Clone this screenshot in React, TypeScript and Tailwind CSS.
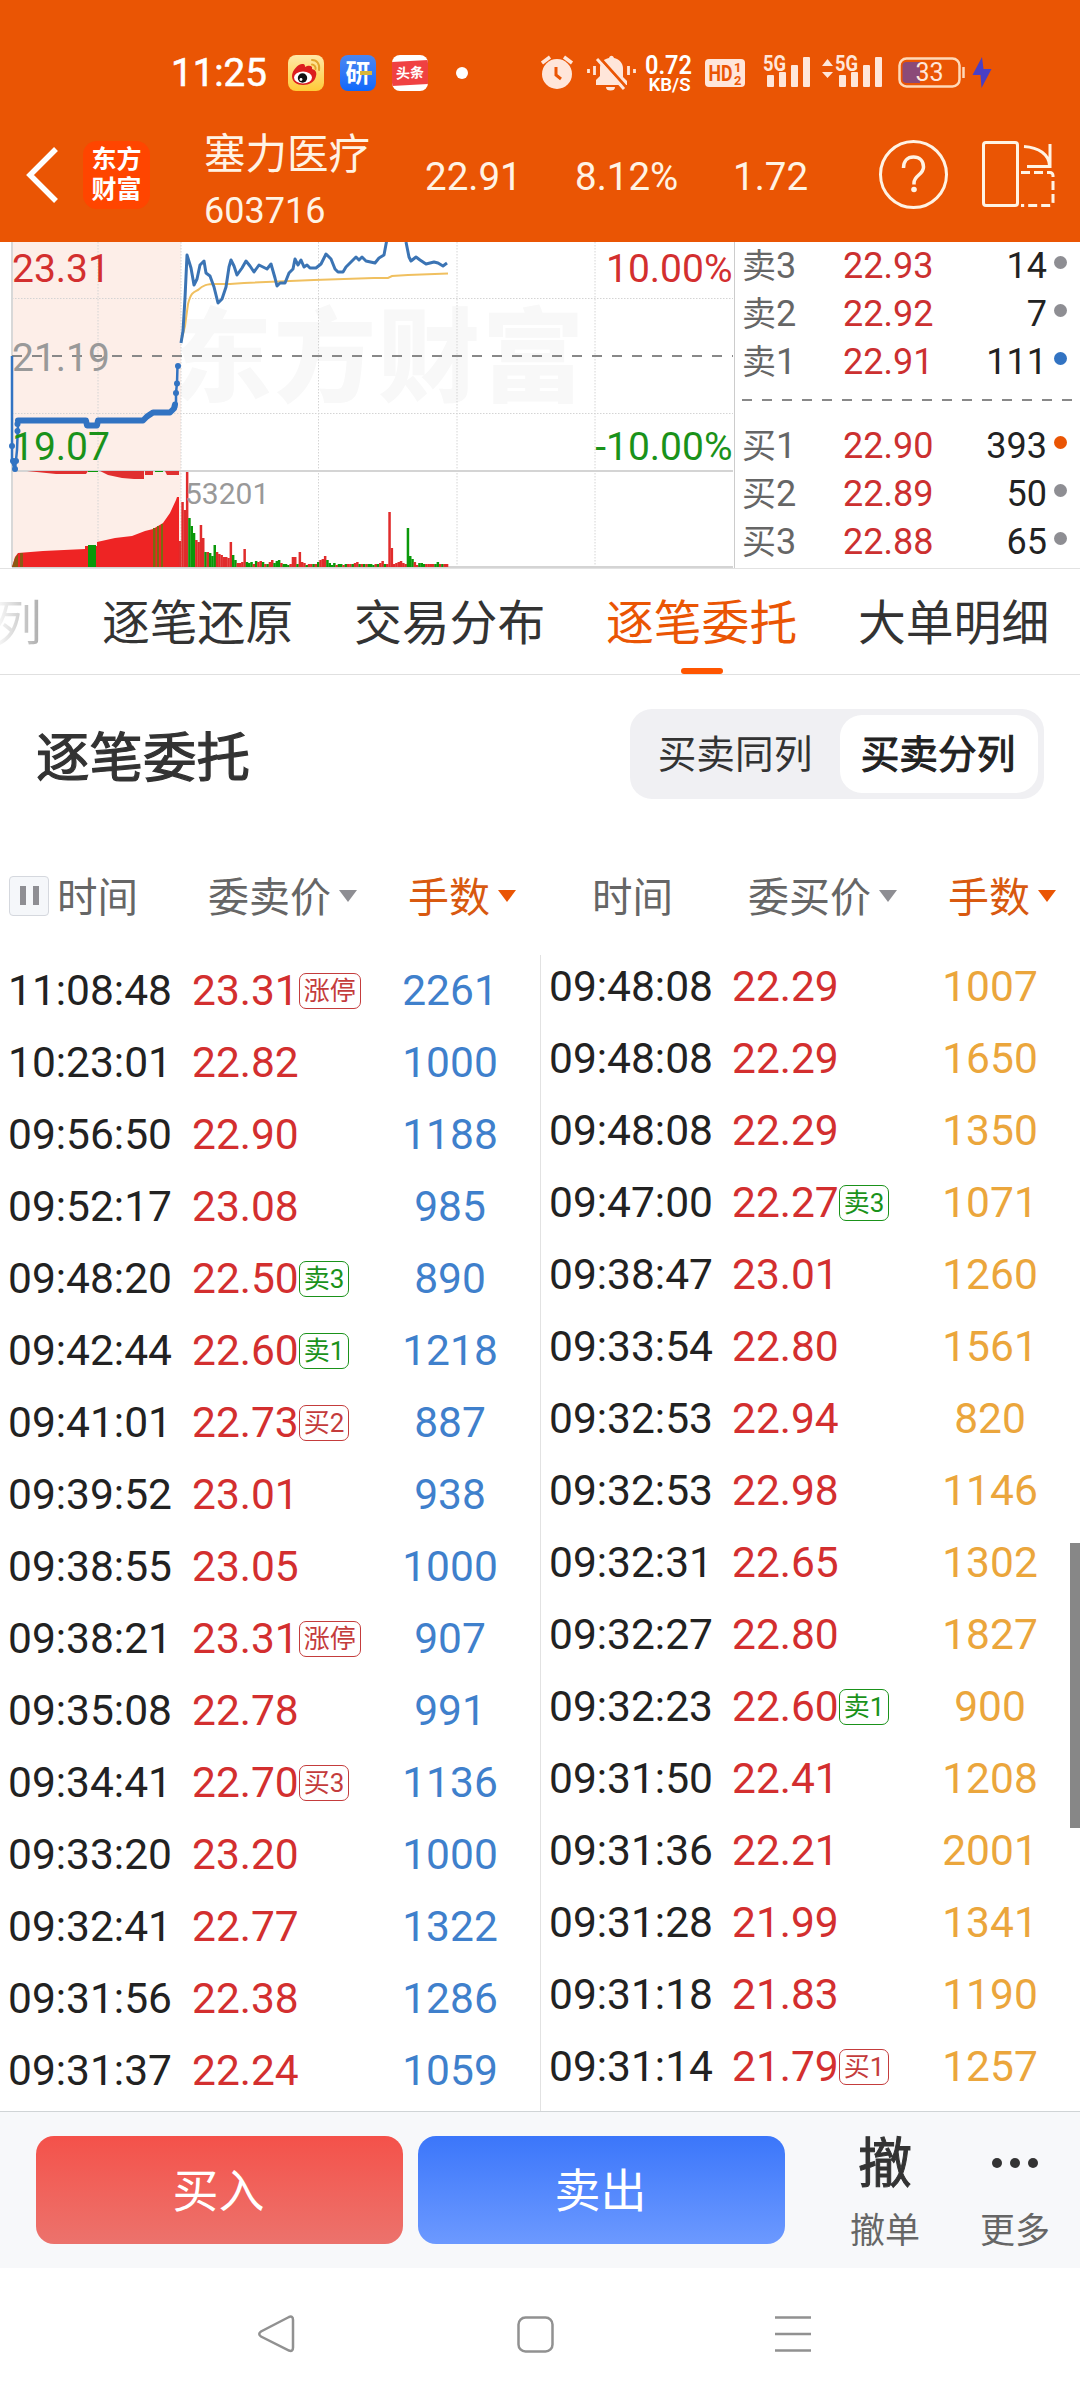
import React from 'react';

type Order = {
  time: string;
  price: string;
  volume: number;
  tag?: string;
};

type Quote = {
  label: string;
  price: string;
  volume: number;
  dot: string;
};

const sellOrders: Order[] = [
  { time: '11:08:48', price: '23.31', volume: 2261, tag: '涨停' },
  { time: '10:23:01', price: '22.82', volume: 1000 },
  { time: '09:56:50', price: '22.90', volume: 1188 },
  { time: '09:52:17', price: '23.08', volume: 985 },
  { time: '09:48:20', price: '22.50', volume: 890, tag: '卖3' },
  { time: '09:42:44', price: '22.60', volume: 1218, tag: '卖1' },
  { time: '09:41:01', price: '22.73', volume: 887, tag: '买2' },
  { time: '09:39:52', price: '23.01', volume: 938 },
  { time: '09:38:55', price: '23.05', volume: 1000 },
  { time: '09:38:21', price: '23.31', volume: 907, tag: '涨停' },
  { time: '09:35:08', price: '22.78', volume: 991 },
  { time: '09:34:41', price: '22.70', volume: 1136, tag: '买3' },
  { time: '09:33:20', price: '23.20', volume: 1000 },
  { time: '09:32:41', price: '22.77', volume: 1322 },
  { time: '09:31:56', price: '22.38', volume: 1286 },
  { time: '09:31:37', price: '22.24', volume: 1059 },
];

const buyOrders: Order[] = [
  { time: '09:48:08', price: '22.29', volume: 1007 },
  { time: '09:48:08', price: '22.29', volume: 1650 },
  { time: '09:48:08', price: '22.29', volume: 1350 },
  { time: '09:47:00', price: '22.27', volume: 1071, tag: '卖3' },
  { time: '09:38:47', price: '23.01', volume: 1260 },
  { time: '09:33:54', price: '22.80', volume: 1561 },
  { time: '09:32:53', price: '22.94', volume: 820 },
  { time: '09:32:53', price: '22.98', volume: 1146 },
  { time: '09:32:31', price: '22.65', volume: 1302 },
  { time: '09:32:27', price: '22.80', volume: 1827 },
  { time: '09:32:23', price: '22.60', volume: 900, tag: '卖1' },
  { time: '09:31:50', price: '22.41', volume: 1208 },
  { time: '09:31:36', price: '22.21', volume: 2001 },
  { time: '09:31:28', price: '21.99', volume: 1341 },
  { time: '09:31:18', price: '21.83', volume: 1190 },
  { time: '09:31:14', price: '21.79', volume: 1257, tag: '买1' },
];

const asks: Quote[] = [
  { label: '卖3', price: '22.93', volume: 14, dot: 'bg-[#8e8e93]' },
  { label: '卖2', price: '22.92', volume: 7, dot: 'bg-[#8e8e93]' },
  { label: '卖1', price: '22.91', volume: 111, dot: 'bg-[#3273c2]' },
];

const bids: Quote[] = [
  { label: '买1', price: '22.90', volume: 393, dot: 'bg-[#ea5504]' },
  { label: '买2', price: '22.89', volume: 50, dot: 'bg-[#8e8e93]' },
  { label: '买3', price: '22.88', volume: 65, dot: 'bg-[#8e8e93]' },
];

// 连续竞价成交量: [x, 高度, 颜色]
const volumeBars: [number, number, 'r' | 'g'][] = [
  [180, 26, 'r'], [182.5, 65, 'r'], [184.8, 57, 'r'], [187.1, 95, 'r'], [189.4, 49, 'g'],
  [191.7, 41, 'g'], [194, 34, 'g'], [196.3, 27, 'r'], [198.6, 25, 'r'], [200.9, 42, 'r'],
  [203.2, 29, 'r'], [205.5, 15, 'g'], [207.8, 15, 'r'], [210.1, 14, 'g'], [212.4, 11, 'g'],
  [214.7, 22, 'g'], [217, 15, 'r'], [219.3, 13, 'r'], [221.6, 12, 'r'], [223.9, 10, 'r'],
  [226.2, 10, 'r'], [228.5, 9, 'r'], [230.8, 25, 'r'], [233.1, 12, 'g'], [235.4, 7, 'g'],
  [237.7, 4, 'r'], [240, 4, 'r'], [242.3, 5, 'r'], [244.6, 18, 'r'], [246.9, 5, 'g'],
  [249.2, 4, 'g'], [251.5, 5, 'g'], [253.8, 3, 'r'], [256.1, 6, 'g'], [258.4, 5, 'r'],
  [260.7, 6, 'r'], [263, 5, 'g'], [265.3, 3, 'r'], [267.6, 3, 'g'], [269.9, 5, 'r'],
  [272.2, 7, 'r'], [274.5, 4, 'g'], [276.8, 6, 'g'], [279.1, 7, 'g'], [281.4, 4, 'r'],
  [283.7, 3, 'g'], [286, 3, 'g'], [288.3, 2, 'g'], [290.6, 3, 'r'], [292.9, 10, 'r'],
  [295.2, 10, 'r'], [297.5, 3, 'g'], [299.8, 15, 'r'], [302.1, 5, 'r'], [304.4, 4, 'r'],
  [306.7, 2, 'g'], [309, 3, 'r'], [311.3, 3, 'r'], [313.6, 3, 'g'], [315.9, 3, 'r'],
  [318.2, 5, 'g'], [320.5, 7, 'r'], [322.8, 8, 'r'], [325.1, 11, 'r'], [327.4, 7, 'g'],
  [329.7, 4, 'g'], [332, 2, 'g'], [334.3, 4, 'g'], [336.6, 2, 'r'], [338.9, 3, 'g'],
  [341.2, 3, 'g'], [343.5, 2, 'r'], [345.8, 3, 'g'], [348.1, 3, 'r'], [350.4, 3, 'r'],
  [352.7, 3, 'g'], [355, 4, 'r'], [357.3, 5, 'r'], [359.6, 3, 'g'], [361.9, 3, 'r'],
  [364.2, 3, 'g'], [366.5, 3, 'r'], [368.8, 3, 'g'], [371.1, 3, 'g'], [373.4, 2, 'g'],
  [375.7, 3, 'r'], [378, 3, 'g'], [380.3, 4, 'r'], [382.6, 6, 'r'], [384.9, 3, 'g'],
  [387.2, 3, 'r'], [389.5, 55, 'r'], [391.8, 19, 'r'], [394.1, 3, 'r'], [396.4, 4, 'r'],
  [398.7, 5, 'r'], [401, 6, 'r'], [403.3, 4, 'r'], [405.6, 3, 'r'], [407.9, 39, 'g'],
  [410.2, 11, 'g'], [412.5, 8, 'g'], [414.8, 5, 'r'], [417.1, 2, 'r'], [419.4, 4, 'g'],
  [421.7, 4, 'g'], [424, 3, 'g'], [426.3, 3, 'r'], [428.6, 3, 'r'], [430.9, 3, 'r'],
  [433.2, 3, 'r'], [435.5, 3, 'g'], [437.8, 5, 'g'], [440.1, 3, 'r'], [442.4, 3, 'g'],
  [444.7, 3, 'r'], [447, 3, 'r'],
];

export default function App() {
  return (
    <div className="flex h-[2400px] w-[1080px] flex-col overflow-hidden bg-white font-[Roboto,'Noto_Sans_CJK_SC',sans-serif] text-[#222]">
      <header className="h-[242px] shrink-0 bg-[#ea5504] text-white">
        <StatusBar />
        <StockHeader />
      </header>

      <section className="flex h-[327px] shrink-0 overflow-hidden border-b border-[#e2e2e2]">
        <TimeChart />
        <div className="flex flex-1 flex-col border-l border-[#ccc] pl-[7px]">
          <div>
            {asks.map((q) => (
              <QuoteRow key={q.label} quote={q} />
            ))}
          </div>
          <svg className="h-9 w-full shrink-0" viewBox="0 0 338 36">
            <path d="M0 14H330" stroke="#888" strokeWidth="2" strokeDasharray="10 10" />
          </svg>
          <div>
            {bids.map((q) => (
              <QuoteRow key={q.label} quote={q} />
            ))}
          </div>
        </div>
      </section>

      <Tabs />

      <div className="flex h-[161px] shrink-0 items-center justify-between px-9 pb-1">
        <h2 className="pt-2.5 text-[53.5px] leading-none text-[#333] [-webkit-text-stroke:1.2px_#333]">逐笔委托</h2>
        <div className="flex h-[90px] w-[414px] items-center rounded-[22px] bg-[#f0f0f3] p-1.5 text-[38.7px] leading-none">
          <span className="w-[204px] pt-1 pr-1.5 text-center text-[#333]">买卖同列</span>
          <span className="flex h-[78px] flex-1 items-center justify-center rounded-[22px] bg-white pt-1 pr-0.5 text-[#222] [-webkit-text-stroke:1px_#222]">
            买卖分列
          </span>
        </div>
      </div>

      <div className="flex h-[119px] shrink-0 text-[40.5px] leading-none text-[#666]">
        <div className="flex w-[540px] items-center">
          <div className="flex w-[208px] items-center pl-[9px]">
            <span className="mr-2 flex h-10 w-10 items-center justify-center gap-[7px] rounded-[4px] border border-[#d5d8de] bg-[#f5f7fa]">
              <i className="h-[19px] w-1.5 bg-[#8e8e93]" />
              <i className="h-[19px] w-1.5 bg-[#8e8e93]" />
            </span>
            <span className="pt-[5px]">时间</span>
          </div>
          <SortLabels price="委卖价" />
        </div>
        <div className="flex w-[540px] items-center">
          <div className="w-[208px] pt-[5px] pl-[52px]">时间</div>
          <SortLabels price="委买价" />
        </div>
      </div>

      <div className="relative flex h-[1156px] shrink-0">
        <div className="w-[540px]">
          {sellOrders.map((o, i) => (
            <OrderRow key={i} order={o} side="sell" />
          ))}
        </div>
        <div className="w-[540px] border-l border-[#e2e2e2]">
          <div className="-mt-1 -ml-px">
            {buyOrders.map((o, i) => (
              <OrderRow key={i} order={o} side="buy" />
            ))}
          </div>
        </div>
        <div className="absolute top-[588px] right-0 h-[285px] w-2.5 bg-[#878787]" />
      </div>

      <ActionBar />
      <NavBar />
    </div>
  );
}

const StatusBar = () => (
  <div className="flex h-[108px] items-end pl-[171px]">
    <div className="flex h-[70px] w-[370px] items-center">
      <span className="w-[117px] text-[38.5px] [-webkit-text-stroke:0.6px_#fff]">11:25</span>
      <svg className="mr-4 h-9 w-9" viewBox="0 0 36 36">
        <defs>
          <linearGradient id="weibo" x1="0" y1="0" x2="0" y2="1">
            <stop offset="0" stopColor="#ffe9a8" />
            <stop offset="1" stopColor="#ffcb38" />
          </linearGradient>
        </defs>
        <rect width="36" height="36" rx="8" fill="url(#weibo)" />
        <path d="M4 21C4 15 11 8 15 9c2 0 2 2 2 3 3-2 8-2 7 2 4 1 5 4 4 7-1 6-7 9-13 9S4 27 4 21z" fill="#dc1e1e" />
        <ellipse cx="15" cy="22.500" rx="9" ry="6" fill="#fff" />
        <circle cx="14.500" cy="23" r="4.700" fill="#111" />
        <circle cx="13" cy="24.500" r="1.400" fill="#fff" />
        <path d="M24 5c5 0 8 4 7 10M24 9.500c2 0 4 2 3.500 4.500" fill="none" stroke="#e2a52c" strokeWidth="2" strokeLinecap="round" />
      </svg>
      <span className="relative mr-4 flex h-9 w-9 items-center justify-center rounded-lg bg-linear-to-b from-[#4a86f0] to-[#0c68fb] text-[25px] leading-none font-bold">
        研
        <i className="absolute top-4 left-5 h-1 w-3 bg-[#d9b63a]" />
      </span>
      <span className="mr-[28px] flex h-9 w-9 items-center overflow-hidden rounded-lg bg-white">
        <span className="flex h-[24px] w-full -skew-y-3 items-center justify-center bg-[#f04142] text-[14px] leading-none font-bold">
          头条
        </span>
      </span>
      <span className="h-3 w-3 rounded-full bg-white" />
    </div>
    <svg className="mb-[10px] h-[50px] w-[539px] font-[Roboto]" viewBox="541 48 539 50" fill="#ffe6da">
      {/* 闹钟 */}
      <circle cx="557" cy="74" r="15" />
      <path d="M542 63l8-6M572 63l-8-6" stroke="#ffe6da" strokeWidth="3.500" />
      <path d="M556 67v8l5 4" fill="none" stroke="#ea5504" strokeWidth="3" />
      {/* 静音 */}
      <path d="M596 85v-5l4-4v-8c0-6 4-9 9-10 1-3 4-3 5 0 5 1 9 5 9 10v9l4 4v4z" />
      <path d="M606 87h9a4.500 3.500 0 0 1-9 0z" />
      <path d="M588.500 69v4M594.500 66v9M628.500 66v9M634.500 69v4" stroke="#ffe6da" strokeWidth="2.800" />
      <path d="M599 57l27 30" stroke="#ea5504" strokeWidth="3" />
      <path d="M597 59l27 30" stroke="#ffe6da" strokeWidth="3" />
      {/* 网速 */}
      <text x="668.500" y="74" fontSize="25.500" fontWeight="600" textAnchor="middle" fill="#fff" textLength="47" lengthAdjust="spacingAndGlyphs">0.72</text>
      <text x="669.500" y="91" fontSize="19" fontWeight="600" textAnchor="middle" fill="#fff" textLength="42" lengthAdjust="spacingAndGlyphs">KB/S</text>
      {/* HD */}
      <rect x="705" y="59" width="40" height="28" rx="4" />
      <g fill="#ea5504" fontWeight="700">
        <text x="708.500" y="81" fontSize="22" textLength="24" lengthAdjust="spacingAndGlyphs">HD</text>
        <text x="734" y="72" fontSize="13">1</text>
        <text x="734" y="84.500" fontSize="13">2</text>
      </g>
      <Signal x={763} />
      <path d="M822 66l5.500-7 5.500 7zM822 72h11l-5.500 6z" />
      <Signal x={835} />
      {/* 电池 */}
      <rect x="899.500" y="58.500" width="60" height="28" rx="7" fill="none" stroke="#ffd9b8" strokeWidth="2.500" />
      <path d="M902.500 66a4 4 0 0 1 4-4H920v21h-13.500a4 4 0 0 1-4-4z" fill="#8b4a78" />
      <path d="M963.500 67v11" stroke="#ffd9b8" strokeWidth="2.500" />
      <text x="929.500" y="81" fontSize="25" textAnchor="middle">33</text>
      <path d="M982 57l-9.500 18h8l1 13 10-19h-8z" fill="#4a3fc4" />
    </svg>
  </div>
);

const Signal = ({ x }: { x: number }) => (
  <g>
    <text x={x} y="70.500" fontSize="22" fontWeight="700" textLength="23" lengthAdjust="spacingAndGlyphs">5G</text>
    <rect x={x + 4} y="75" width="7" height="12" rx="1" />
    <rect x={x + 16} y="72" width="7" height="15" rx="1" />
    <rect x={x + 28} y="65" width="7" height="22" rx="1" />
    <rect x={x + 40} y="57" width="7" height="30" rx="1" />
  </g>
);

const StockHeader = () => (
  <div className="flex h-[134px] items-center text-[#fff3e4]">
    <svg className="ml-[26px] h-[60px] w-[34px]" viewBox="0 0 34 60" fill="none">
      <path d="M30 4L4 30l26 26" stroke="#fff" strokeWidth="5.500" />
    </svg>
    <div className="ml-[23px] flex h-[68px] w-[67px] flex-col items-center justify-center gap-1 rounded-[14px] bg-[#ff4500] text-[25px] leading-[26px] font-bold text-white">
      <span>东方</span>
      <span>财富</span>
    </div>
    <div className="ml-[54px] flex w-[221px] flex-col pt-4">
      <span className="text-[41.5px] leading-[56px]">塞力医疗</span>
      <span className="text-[36px] leading-[56px]">603716</span>
    </div>
    <div className="flex w-[450px] pt-1 text-[38.5px]">
      <span className="w-[150px]">22.91</span>
      <span className="w-[158px]">8.12%</span>
      <span>1.72</span>
    </div>
    <svg className="h-[76px] w-[190px]" viewBox="875 137 190 76" fill="none" stroke="#fff3e4" strokeWidth="3">
      <circle cx="913.500" cy="174.500" r="33" />
      <path d="M903.500 168c0-7 4-11 10-11s10 4 10 10c0 8-9.500 8-9.500 16v1.500" strokeWidth="3.500" />
      <circle cx="914" cy="189.500" r="2.800" fill="#fff3e4" stroke="none" />
      <rect x="983.500" y="142.500" width="34" height="63" rx="2.500" />
      <path d="M1024 146.500c15 1 25 8 25.500 19M1050 144v22.500h-23" />
      <path d="M1021 172.500h29a3 3 0 0 1 3 3v27a3 3 0 0 1-3 3h-29" strokeDasharray="9 4" />
    </svg>
  </div>
);

const TimeChart = () => (
  <svg className="h-[326px] w-[734px] shrink-0 font-[Roboto]" viewBox="0 242 734 326" fill="none">
    <text x="170" y="394" fontSize="102" fontWeight="900" fill="#f8f8f8" className="font-['Noto_Sans_CJK_SC']" textLength="414">东方财富</text>
    <rect x="12" y="242" width="169" height="325" fill="#fdeee8" />
    <path d="M12 298.500H733M12 413.500H733M98 242V567M181 242V567M318.500 242V567M457 242V567M595 242V567" stroke="#d4d4d4" strokeDasharray="1.500 1.500" />
    <path d="M12 242V567" stroke="#d8d8d8" strokeWidth="2" />
    <path d="M12 356H733" stroke="#888" strokeWidth="2" strokeDasharray="10 10" />
    <path d="M12 471H733M12 567H733" stroke="#d4d4d4" strokeWidth="2" />

    {/* 集合竞价 */}
    <path d="M12 567L15 557 18 553 43 551 85 549V546H97V542L115 538 132 536 145 531 153 529 163 523 170 513 176 500 177 497H179V567z" fill="#ee2424" />
    <path d="M88 545h8v22h-8z" fill="#0a980a" />
    <path d="M153 528h2.500v39H153zM157 526h2v41h-2zM161 524h2v43h-2z" fill="#7a6a10" />
    <path d="M12 567l3-9 3-4v13zM20 553h3v14h-3z" fill="#8a5a14" />
    <path d="M27 471H88l-2 3-30 0zM100 471h44v8h-10l-12-1-14-3zM145 471h8v4h-8zM165 471h14v4h-12z" fill="#e03030" />
    <path d="M88 471.500h10M155 471.500h8" stroke="#0a980a" />
    {volumeBars.map(([x, h, c]) => (
      <rect key={x} x={x - 1.2} y={567 - h} width="2.500" height={h} fill={c === 'r' ? '#e02c2c' : '#0a980a'} />
    ))}

    {/* 均价线 */}
    <path d="M181 342l4-16 3-22c3-12 6-12 10-14 5-5 9-6 18-6h14l14-1 70-3 60-2 14 0 4-2 16-1 40-1.500" stroke="#f0c060" strokeWidth="2" />
    {/* 分时线 */}
    <path
      d="M181 343l2-12 2-33 2-43 4 13 3 17 3-6 3-14 4-4 2 12 4 3 4 11 4 16 4-4 4-12 3-20 2-7 3 6 3 9 5-7 4-7 4 5 4 6 5-7 8 4 4-5 4 14 2 8 3-3 5 0 4-10 4-4 2-10 3 6 3-5 3 7 3-2 3 3 6 0 5-4 5-10 5 5 4 10 3 3h5l3-5 5-5 5-5 3 3 3-3 4 4 9 2 4-5 5-3 3-16M406 242l3 15 2 4 5-4 4 3 6 4 8-2 4 1 5 3 4-3"
      stroke="#3b74b4"
      strokeWidth="3"
      strokeLinejoin="round"
    />
    <path d="M12 356V461l3 9 2-20 1-26" stroke="#3273c2" strokeWidth="2.500" />
    <path d="M18 420.500H86l1 5h10l1-5h45l4-4 6-4h17l4-4 1-4" stroke="#3273c2" strokeWidth="6" strokeLinecap="round" strokeLinejoin="round" />
    <path d="M176 408V393l1-10 .5-17" stroke="#3273c2" strokeWidth="2.500" />
    <g fill="#3273c2">
      <circle cx="12" cy="446" r="3" />
      <circle cx="13" cy="461" r="3" />
      <circle cx="16" cy="461" r="3" />
      <circle cx="15" cy="469" r="3" />
      <circle cx="17.500" cy="431" r="3" />
      <circle cx="17.500" cy="424" r="3" />
      <circle cx="176" cy="393" r="3" />
      <circle cx="177" cy="383.500" r="3" />
      <circle cx="178" cy="366" r="3" />
    </g>

    <g fontSize="39">
      <text x="12" y="282" fill="#d32f2f">23.31</text>
      <text x="12" y="371" fill="#999">21.19</text>
      <text x="12" y="460" fill="#1a921a">19.07</text>
      <text x="732.500" y="282" fill="#d32f2f" textAnchor="end">10.00%</text>
      <text x="732.500" y="460" fill="#1a921a" textAnchor="end">-10.00%</text>
    </g>
    <text x="185" y="504" fontSize="30" fill="#999">53201</text>
  </svg>
);

const QuoteRow = ({ quote }: { quote: Quote }) => (
  <div className="flex h-12 items-center text-[36px] leading-none">
    <span className="w-[101px] text-[#666]">
      <span className="text-[34px]">{quote.label[0]}</span>
      {quote.label[1]}
    </span>
    <span className="w-[100px] text-[#cc3030]">{quote.price}</span>
    <span className="w-[104px] text-right">{quote.volume}</span>
    <span className={`mb-2 ml-[7px] h-[13px] w-[13px] rounded-full ${quote.dot}`} />
  </div>
);

const tabs = ['逐笔还原', '交易分布', '逐笔委托', '大单明细'];

const Tabs = () => (
  <nav className="flex h-[106px] shrink-0 gap-[60px] overflow-hidden border-b border-[#e0e0e0] text-[47.8px] leading-none text-[#333]">
    <span className="-ml-1.5 flex w-12 items-center bg-linear-to-r from-white to-[#aaa] bg-clip-text pt-1.5 text-transparent">列</span>
    {tabs.map((tab) => (
      <div
        key={tab}
        className={`relative flex w-48 shrink-0 items-center pt-1.5 ${tab === '逐笔委托' ? 'text-[#ea5504]' : ''}`}
      >
        {tab}
        {tab === '逐笔委托' && (
          <span className="absolute bottom-0 left-[75px] h-1.5 w-[42px] rounded-[3px] bg-[#ff5500]" />
        )}
      </div>
    ))}
  </nav>
);

const SortLabels = ({ price }: { price: string }) => (
  <>
    <div className="flex w-[200px] items-center">
      <span className="pt-[5px] text-[41px]">{price}</span>
      <svg className="ml-2 h-3 w-[18px]" viewBox="0 0 18 12">
        <path d="M0 0h18l-9 12z" fill="#8e8e93" />
      </svg>
    </div>
    <div className="flex items-center text-[#d8590f]">
      <span className="pt-[5px] text-[41px]">手数</span>
      <svg className="ml-2 h-3 w-[18px]" viewBox="0 0 18 12">
        <path d="M0 0h18l-9 12z" fill="#ea5504" />
      </svg>
    </div>
  </>
);

const OrderRow = ({ order, side }: { order: Order; side: 'sell' | 'buy' }) => (
  <div className="flex h-[72px] items-center text-[42.5px] leading-none">
    <span className={side === 'sell' ? 'w-48 pl-2' : 'w-48 pl-[9px]'}>{order.time}</span>
    <div className="flex w-[182px] items-center text-[#d32f2f]">
      {order.price}
      {order.tag && (
        <span
          className={`flex h-9 items-center rounded-[7px] border px-1 text-[26px] leading-none ${
            order.tag.startsWith('卖') ? 'border-[#1a921a] text-[#1a921a]' : 'border-[#c43c3c] text-[#c43c3c]'
          }`}
        >
          {order.tag}
        </span>
      )}
    </div>
    <span className={`w-[152px] text-center ${side === 'sell' ? 'text-[#3f80cc]' : 'text-[#eba63c]'}`}>
      {order.volume}
    </span>
  </div>
);

const ActionBar = () => (
  <div className="flex h-[157px] shrink-0 border-t border-[#d0d4d6] bg-[#f7f8fa] pt-6 pl-9 text-[#333]">
    <button className="mr-[15px] h-[108px] w-[367px] rounded-[18px] bg-linear-to-b from-[#f4514a] to-[#ec726c] pt-0.5 pr-0.5 text-[46px] text-white">
      买入
    </button>
    <button className="h-[108px] w-[367px] rounded-[18px] bg-linear-to-b from-[#3b76fa] to-[#6c99ff] pt-0.5 pr-0.5 text-[46px] text-white">
      卖出
    </button>
    <div className="ml-[35px] flex w-[130px] flex-col items-center">
      <span className="pt-0.5 text-[54px] leading-[54px] [-webkit-text-stroke:1px_#333]">撤</span>
      <span className="mt-[22px] text-[35px] leading-none text-[#666]">撤单</span>
    </div>
    <div className="flex w-[130px] flex-col items-center">
      <div className="flex h-[54px] items-center gap-2">
        <i className="h-2.5 w-2.5 rounded-full bg-[#333]" />
        <i className="h-2.5 w-2.5 rounded-full bg-[#333]" />
        <i className="h-2.5 w-2.5 rounded-full bg-[#333]" />
      </div>
      <span className="mt-6 text-[35px] leading-none text-[#666]">更多</span>
    </div>
  </div>
);

const NavBar = () => (
  <div className="h-[132px] bg-white">
    <svg className="h-full w-full" viewBox="0 2268 1080 132" fill="none" stroke="#919191" strokeWidth="2.500">
      <path d="M289 2317l-28 14.500q-3.500 2.500 0 5l28 14q4 1.500 4-3V2320q0-4.500-4-3z" />
      <rect x="518.500" y="2317.500" width="34" height="34" rx="7" />
      <path d="M775 2317.500h36M775 2334h36M775 2350.500h36" />
    </svg>
  </div>
);
